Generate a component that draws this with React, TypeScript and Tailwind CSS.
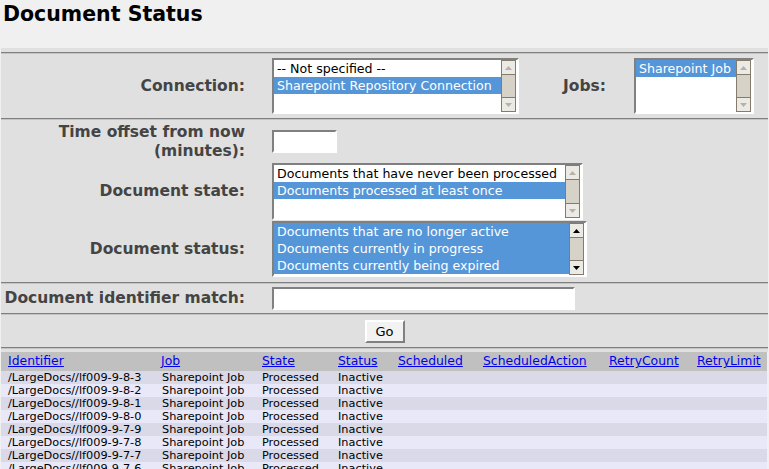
import React from "react";

type Opt = { label: string; selected?: boolean };

function Arrow({ up, active }: { up: boolean; active: boolean }) {
  return (
    <svg width="7" height="4" viewBox="0 0 7 4">
      <path d={up ? "M0 4 L3.5 0 L7 4 Z" : "M0 0 L3.5 4 L7 0 Z"} fill={active ? "#000000" : "#b6b2aa"} />
    </svg>
  );
}

function ScrollBar({ active }: { active: boolean }) {
  return (
    <div className="flex w-[15px] flex-col border border-[#857b6c] bg-[#d6d2c8]">
      <div className="flex h-[14px] items-center justify-center border-b border-[#857b6c] bg-[#eceae4]">
        <Arrow up active={active} />
      </div>
      <div className="flex-1" />
      <div className="flex h-[14px] items-center justify-center border-t border-[#857b6c] bg-[#eceae4]">
        <Arrow up={false} active={active} />
      </div>
    </div>
  );
}

function ListBox({ options, className, active = false }: { options: Opt[]; className: string; active?: boolean }) {
  return (
    <div
      className={`flex border-2 border-t-[#808080] border-l-[#808080] border-b-white border-r-white bg-white pr-[1px] ${className}`}
    >
      <div className="min-w-0 flex-1 overflow-hidden">
        {options.map((o) => (
          <div
            key={o.label}
            className={`h-[17px] whitespace-nowrap pl-[3px] leading-[17px] ${
              o.selected ? "bg-[#5596d8] text-white" : "text-black"
            }`}
          >
            {o.label}
          </div>
        ))}
      </div>
      <ScrollBar active={active} />
    </div>
  );
}

function TextBox({ className }: { className: string }) {
  return (
    <div className={`h-[23px] border-2 border-t-[#808080] border-l-[#808080] border-b-white border-r-white bg-white ${className}`} />
  );
}

function Sep() {
  return <div className="h-[2px] border-t border-b border-t-[#7f7f7f] border-b-[#c4c4c4]" />;
}

function Label({ children, className = "" }: { children: React.ReactNode; className?: string }) {
  return (
    <div className={`whitespace-nowrap text-right text-[15.5px] font-bold leading-[19px] text-[#444444] ${className}`}>
      {children}
    </div>
  );
}

const cols = "grid grid-cols-[153px_101px_76px_60px_85px_126px_88px_77px]";
const heads = ["Identifier", "Job", "State", "Status", "Scheduled", "ScheduledAction", "RetryCount", "RetryLimit"];
const docs = ["8-3", "8-2", "8-1", "8-0", "7-9", "7-8", "7-7", "7-6"];

export default function App() {
  return (
    <div className="h-[469px] w-[769px] overflow-hidden bg-[#f0f0f0] font-['DejaVu_Sans',sans-serif] text-[12.6px]">
      <h1 className="h-[48px] pl-[3px] pt-[2px] text-[20.5px] font-bold leading-[24px] text-black">Document Status</h1>

      <div className="ml-[1px] w-[767px] bg-[#e0e0e0] pb-[3px] pt-[4px]">
        <Sep />
        <div className="flex h-[64px] items-center">
          <Label className="w-[244px]">Connection:</Label>
          <ListBox
            className="ml-[27px] h-[56px] w-[247px]"
            options={[{ label: "-- Not specified --" }, { label: "Sharepoint Repository Connection", selected: true }]}
          />
          <Label className="w-[87px]">Jobs:</Label>
          <ListBox className="ml-[28px] h-[56px] w-[120px]" options={[{ label: "Sharepoint Job", selected: true }]} />
        </div>
        <Sep />
        <div className="pb-[4px]">
          <div className="flex h-[43px] items-center">
            <Label className="w-[244px] leading-[18px]">
              Time offset from now
              <br />
              (minutes):
            </Label>
            <TextBox className="ml-[27px] w-[65px]" />
          </div>
          <div className="flex h-[57px] items-center">
            <Label className="w-[244px]">Document state:</Label>
            <ListBox
              className="ml-[27px] h-[57px] w-[311px]"
              options={[
                { label: "Documents that have never been processed" },
                { label: "Documents processed at least once", selected: true },
              ]}
            />
          </div>
          <div className="flex h-[58px] items-center">
            <Label className="w-[244px]">Document status:</Label>
            <ListBox
              active
              className="ml-[27px] h-[56px] w-[315px]"
              options={[
                { label: "Documents that are no longer active", selected: true },
                { label: "Documents currently in progress", selected: true },
                { label: "Documents currently being expired", selected: true },
              ]}
            />
          </div>
        </div>
        <Sep />
        <div className="flex h-[29px] items-center">
          <Label className="w-[244px]">Document identifier match:</Label>
          <TextBox className="ml-[27px] w-[303px]" />
        </div>
        <Sep />
        <div className="flex h-[32px] items-center justify-center">
          <button className="h-[23px] w-[40px] border-2 border-t-white border-l-white border-b-[#808080] border-r-[#808080] bg-[#f2f2f2] text-[13px] leading-[19px] text-black">
            Go
          </button>
        </div>
        <Sep />
      </div>

      <div className="ml-[1px] w-[766px]">
        <div className={`${cols} h-[19px] items-center bg-[#c0c0c0] text-[12.4px]`}>
          {heads.map((h) => (
            <div key={h} className="pl-[7px]">
              <a href="#" className="text-[#0000ee] underline">
                {h}
              </a>
            </div>
          ))}
        </div>
        {docs.map((d, i) => (
          <div
            key={d}
            className={`${cols} h-[13px] text-[11.3px] leading-[13px] text-black ${i % 2 === 0 ? "bg-[#d9d9e8]" : "bg-[#e8e8f8]"}`}
          >
            <div className="whitespace-nowrap pl-[7px]">/LargeDocs//lf009-9-{d}</div>
            <div className="whitespace-nowrap pl-[8px]">Sharepoint Job</div>
            <div className="pl-[7px]">Processed</div>
            <div className="pl-[7px]">Inactive</div>
            <div />
            <div />
            <div />
            <div />
          </div>
        ))}
      </div>
    </div>
  );
}
